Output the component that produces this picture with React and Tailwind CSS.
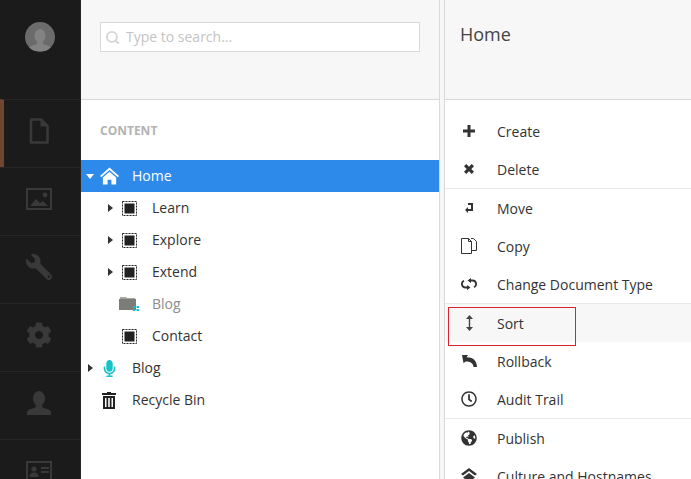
import { Search } from "lucide-react";
import { FaCog, FaGlobeAmericas, FaMicrophone, FaRegClock, FaWrench } from "react-icons/fa";

const SIDEBAR_ITEMS = [
  { id: "content", active: true, icon: <PageIcon /> },
  { id: "media", icon: <PictureIcon /> },
  { id: "settings", icon: <FaWrench size={26} className="-scale-x-100" /> },
  { id: "developer", icon: <FaCog size={26} /> },
  { id: "users", icon: <PersonIcon className="w-[24px] h-[24px]" /> },
  { id: "members", icon: <CardIcon /> },
];

function PersonIcon({ className }) {
  return (
    <svg viewBox="0 0 24 24" className={className} fill="currentColor">
      <ellipse cx="12" cy="7.500" rx="6" ry="7.500" />
      <path d="M8.500 14.500h7v2l6 2c1.500.500 2.500 1.500 2.500 3v2.500H0v-2.500c0-1.500 1-2.500 2.500-3l6-2z" />
    </svg>
  );
}

function PageIcon() {
  return (
    <svg viewBox="0 0 20 26" className="w-[20px] h-[26px]" fill="none" stroke="currentColor" strokeWidth="2.6">
      <path d="M2 1.500h10l6.500 6.500v16.500H2z" strokeLinejoin="round" />
      <path d="M11.500 1.500v7h7" fill="currentColor" stroke="none" />
    </svg>
  );
}

function PictureIcon() {
  return (
    <svg viewBox="0 0 26 22" className="w-[26px] h-[22px]" fill="currentColor">
      <path fillRule="evenodd" d="M0 0h26v22H0zM2 2v18h22V2z" />
      <circle cx="19" cy="7" r="2.400" />
      <path d="M4 18l6-7 4 4 3-2 5 5z" />
    </svg>
  );
}

function CardIcon() {
  return (
    <svg viewBox="0 0 26 20" className="w-[26px] h-[20px]" fill="currentColor">
      <path fillRule="evenodd" d="M0 0h26v20H0zM2 2v16h22V2z" />
      <circle cx="8" cy="8" r="2.600" />
      <path d="M3.500 16c0-3.500 2-4.500 4.500-4.500s4.500 1 4.500 4.500zM15 6h8v2h-8zM15 10h8v2h-8z" />
    </svg>
  );
}

function HomeIcon() {
  return (
    <svg viewBox="0 0 20 18" className="w-[19px] h-[18px]" fill="#fff">
      <path d="M10 0l10 9-1.200 1.400L10 2.600 1.200 10.400 0 9z" />
      <path d="M10 4.500l7 6.200V18h-5v-5H8v5H3v-7.300z" />
    </svg>
  );
}

function NodeIcon() {
  return (
    <svg viewBox="0 0 15 15" className="w-[15px] h-[15px]" fill="#222">
      <rect x="2.500" y="2.500" width="10" height="10" />
      <rect x="0.500" y="0.500" width="14" height="14" fill="none" stroke="#222" strokeDasharray="2 1" />
    </svg>
  );
}

function FolderIcon() {
  return (
    <svg viewBox="0 0 20 16" className="w-[20px] h-[16px]">
      <path d="M1 1h6l1 1h8v1H1z" fill="#a5a5a5" />
      <path d="M0 3h17v11H0z" fill="#7c7c78" />
      <path d="M14 10h2.500v2H14zM17.500 10H20v2h-2.500zM14 13h2.500v2H14zM17.500 13H20v2h-2.500z" fill="#17c1c9" />
    </svg>
  );
}

function BinIcon() {
  return (
    <svg viewBox="0 0 14 17" className="w-[14px] h-[17px]" fill="#222">
      <path d="M5 0h4v1h5v2H0V1h5z" />
      <path fillRule="evenodd" d="M1 4h12v13H1zM3 6v9h1.500V6zM6.200 6v9h1.600V6zM9.500 6v9H11V6z" />
    </svg>
  );
}

function PlusIcon() {
  return (
    <svg viewBox="0 0 12 12" className="w-[12px] h-[12px]" fill="#333">
      <path d="M4.500 0h3v4.500H12v3H7.500V12h-3V7.500H0v-3h4.500z" />
    </svg>
  );
}

function CrossIcon() {
  return (
    <svg viewBox="0 0 10 10" className="w-[10px] h-[10px]" fill="#333">
      <path d="M2.300 0L5 2.700 7.700 0 10 2.300 7.300 5 10 7.700 7.700 10 5 7.300 2.300 10 0 7.700 2.700 5 0 2.300z" />
    </svg>
  );
}

function MoveIcon() {
  return (
    <svg viewBox="0 0 8 10" className="w-[8px] h-[10px]" fill="#333">
      <path d="M3 0h5v8H3v2L0 7l3-3v2h3V2H3z" />
    </svg>
  );
}

function CopyIcon() {
  return (
    <svg viewBox="0 0 16 16" className="w-[16px] h-[16px]" fill="none" stroke="#333">
      <path d="M.500.500h7l3 3v12H.500z" />
      <path d="M7.500.500v3h3M10 .500h2.500l3 3v9H11" />
    </svg>
  );
}

function ChangeIcon() {
  return (
    <svg viewBox="0 0 16 12" className="w-[16px] h-[12px]" fill="none" stroke="#333" strokeWidth="1.800">
      <path d="M8 2.500h3.500a3.500 3.500 0 0 1 1.500 6.700M8 9.500H4.500A3.500 3.500 0 0 1 3 2.800" />
      <path d="M10 0v5L6.500 2.500zM6 7v5l3.500-2.500z" fill="#333" stroke="none" />
    </svg>
  );
}

function SortIcon() {
  return (
    <svg viewBox="0 0 7 16" className="w-[7px] h-[16px]" fill="#444">
      <path d="M3.500 0L7 4H4.200v8H7l-3.500 4L0 12h2.800V4H0z" />
    </svg>
  );
}

function RollbackIcon() {
  return (
    <svg viewBox="0 0 15 12" className="w-[15px] h-[12px]" fill="#333">
      <path d="M0 0h6L4.500 2.200C10 2 15 5 15 12h-3.500C11.500 8.500 8 6.300 3.800 6.500L1.500 8z" />
    </svg>
  );
}

function HostnameIcon() {
  return (
    <svg viewBox="0 0 16 16" className="w-[16px] h-[16px]" fill="#333">
      <path d="M8 0l8 6-2 1.500L8 3 2 7.500 0 6zM8 5l6 4.500-6 4.500-6-4.500z" />
    </svg>
  );
}

function Caret({ open }) {
  if (open) {
    return <span className="w-0 h-0 border-x-[4.5px] border-x-transparent border-t-[5px] border-t-white" />;
  }
  return <span className="w-0 h-0 border-y-[4px] border-y-transparent border-l-[5px] border-l-[#333]" />;
}

function TreeRow({ label, icon, caret, open, selected, muted, child }) {
  return (
    <div
      className={
        "flex items-center h-[32px] text-[14px] " +
        (selected ? "bg-[#2e8aea] text-white " : "") +
        (muted ? "text-[#8c8c8c] " : selected ? "" : "text-[#333] ")
      }
    >
      <span className={"flex justify-center shrink-0 w-[10px] " + (child ? "ml-[24px]" : "ml-[4px]")}>
        {caret && <Caret open={open} />}
      </span>
      <span className="flex justify-center shrink-0 w-[24px] ml-[2px]">{icon}</span>
      <span className="ml-[11px] pb-[2px]">{label}</span>
    </div>
  );
}

function ActionRow({ label, icon, hover }) {
  return (
    <div className={"flex items-center h-[38px] text-[14px] text-[#333] " + (hover ? "bg-[#f7f7f7]" : "")}>
      <span className="flex justify-center w-[16px] ml-[16px] shrink-0">{icon}</span>
      <span className="ml-[20px] whitespace-nowrap">{label}</span>
    </div>
  );
}

export default function App() {
  return (
    <div className="flex h-[479px] w-[691px] overflow-hidden bg-white font-['Open_Sans',sans-serif]">
      {/* main nav */}
      <div className="w-[81px] shrink-0 bg-[#1b1b1b] border-r border-[#262626] flex flex-col">
        <div className="h-[99px] shrink-0 flex justify-center pt-[22px]">
          <div className="w-[30px] h-[30px] rounded-full bg-[#6b6b6b] overflow-hidden flex items-end justify-center">
            <PersonIcon className="w-[22px] h-[24px] text-[#828282]" />
          </div>
        </div>
        {SIDEBAR_ITEMS.map((item) => (
          <div
            key={item.id}
            className={
              "h-[68px] shrink-0 flex items-center justify-center border-t border-[#262626] text-[#393939] pb-[6px] pr-[3px] " +
              (item.active ? "border-l-4 border-l-[#6f4630] pr-[7px]" : "")
            }
          >
            {item.icon}
          </div>
        ))}
      </div>

      {/* tree */}
      <div className="w-[358px] shrink-0 flex flex-col">
        <div className="h-[100px] shrink-0 bg-[#f7f7f7] border-b border-[#d9d9d9] px-[19px] pt-[22px]">
          <div className="flex items-center h-[30px] w-[320px] bg-white border border-[#d9d9d9] pl-[4px]">
            <Search size={15} strokeWidth={3} className="text-[#d4d4d4]" />
            <span className="ml-[6px] pb-[2px] text-[14px] text-[#c4c4c4]">Type to search...</span>
          </div>
        </div>
        <div className="h-[60px] shrink-0 pl-[19px] pt-[22px] text-[12px] leading-[17px] font-bold text-[#b3b3b3]">CONTENT</div>
        <TreeRow selected caret open label="Home" icon={<HomeIcon />} />
        <TreeRow child caret label="Learn" icon={<NodeIcon />} />
        <TreeRow child caret label="Explore" icon={<NodeIcon />} />
        <TreeRow child caret label="Extend" icon={<NodeIcon />} />
        <TreeRow child muted label="Blog" icon={<FolderIcon />} />
        <TreeRow child label="Contact" icon={<NodeIcon />} />
        <TreeRow caret label="Blog" icon={<FaMicrophone size={17} color="#17c1c9" />} />
        <TreeRow label="Recycle Bin" icon={<BinIcon />} />
      </div>

      {/* splitter */}
      <div className="w-[6px] shrink-0 bg-[#f7f7f7] border-x border-[#d9d9d9]" />

      {/* actions */}
      <div className="relative flex-1 flex flex-col">
        <div className="h-[100px] shrink-0 bg-[#f7f7f7] border-b border-[#d9d9d9] pl-[15px] pt-[20px] text-[18px] leading-[28px] text-[#444]">
          Home
        </div>
        <div className="pt-[12px] border-b border-[#e9e9e9]">
          <ActionRow label="Create" icon={<PlusIcon />} />
          <ActionRow label="Delete" icon={<CrossIcon />} />
        </div>
        <div className="border-b border-[#e9e9e9]">
          <ActionRow label="Move" icon={<MoveIcon />} />
          <ActionRow label="Copy" icon={<CopyIcon />} />
          <ActionRow label="Change Document Type" icon={<ChangeIcon />} />
        </div>
        <div className="border-b border-[#e9e9e9]">
          <ActionRow hover label="Sort" icon={<SortIcon />} />
          <ActionRow label="Rollback" icon={<RollbackIcon />} />
          <ActionRow label="Audit Trail" icon={<FaRegClock size={16} />} />
        </div>
        <div>
          <ActionRow label="Publish" icon={<FaGlobeAmericas size={16} />} />
          <ActionRow label="Culture and Hostnames" icon={<HostnameIcon />} />
        </div>
        {/* annotation */}
        <div className="absolute left-[3px] top-[307px] w-[128px] h-[39px] border border-[#d9232e]" />
      </div>
    </div>
  );
}
